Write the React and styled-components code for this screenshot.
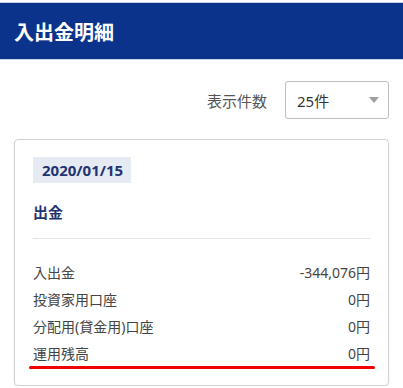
import React from "react";
import styled, { createGlobalStyle } from "styled-components";

const GlobalStyle = createGlobalStyle`
  body {
    margin: 0;
    background: #fff;
    font-family: "Noto Sans", "Noto Sans CJK JP", sans-serif;
  }
`;

const Page = styled.div`
  padding-top: 2px;
`;

const Header = styled.header`
  height: 56px;
  background: #0c338b;
  border-top: 1px solid #c9d2e4;
  border-bottom: 1px solid #c9d2e4;
  display: flex;
  align-items: center;
  padding-left: 14px;
  color: #fff;
  font-size: 20px;
  font-weight: 700;
`;

const Controls = styled.div`
  display: flex;
  justify-content: flex-end;
  align-items: center;
  gap: 18px;
  margin-top: 21px;
  padding-right: 14px;
`;

const Label = styled.span`
  font-size: 15px;
  color: #555;
`;

const Select = styled.div`
  box-sizing: border-box;
  width: 104px;
  height: 38px;
  border: 1px solid #bdbdbd;
  border-radius: 3px;
  display: flex;
  align-items: center;
  justify-content: space-between;
  padding: 0 9px 0 11px;
  font-size: 15px;
  color: #333;
`;

const Caret = styled.span`
  width: 0;
  height: 0;
  border-left: 5px solid transparent;
  border-right: 5px solid transparent;
  border-top: 6px solid #a0a0a0;
`;

const Card = styled.section`
  margin: 20px 14px 0 14px;
  border: 1px solid #d2d2d2;
  border-radius: 4px;
  box-shadow: 0 1px 2px rgba(0, 0, 0, 0.1);
  padding: 17px 18px 19px 18px;
`;

const Badge = styled.div`
  display: inline-flex;
  align-items: center;
  height: 26px;
  padding: 0 8px 0 9px;
  background: #e5eaf3;
  color: #1f3470;
  font-size: 15px;
  font-weight: 700;
`;

const Kind = styled.div`
  margin-top: 19px;
  font-size: 15px;
  line-height: 20px;
  font-weight: 700;
  color: #1f3470;
`;

const Divider = styled.hr`
  margin: 16px 0 19px;
  border: 0;
  border-top: 1px solid #e4e4e4;
`;

const Row = styled.div`
  position: relative;
  display: flex;
  justify-content: space-between;
  align-items: center;
  height: 27px;
  font-size: 14px;
  color: #444;

  ${(p) =>
    p.$marked &&
    `
    &::after {
      content: "";
      position: absolute;
      left: -4px;
      right: -5px;
      bottom: -3px;
      height: 3px;
      border-radius: 2px;
      background: #f00000;
    }
  `}
`;

const rows = [
  ["入出金", "-344,076円"],
  ["投資家用口座", "0円"],
  ["分配用(貸金用)口座", "0円"],
  ["運用残高", "0円"],
];

export default function App() {
  return (
    <Page>
      <GlobalStyle />
      <Header>入出金明細</Header>
      <Controls>
        <Label>表示件数</Label>
        <Select>
          25件
          <Caret />
        </Select>
      </Controls>
      <Card>
        <Badge>2020/01/15</Badge>
        <Kind>出金</Kind>
        <Divider />
        {rows.map(([k, v], i) => (
          <Row key={k} $marked={i === rows.length - 1}>
            <span>{k}</span>
            <span>{v}</span>
          </Row>
        ))}
      </Card>
    </Page>
  );
}
